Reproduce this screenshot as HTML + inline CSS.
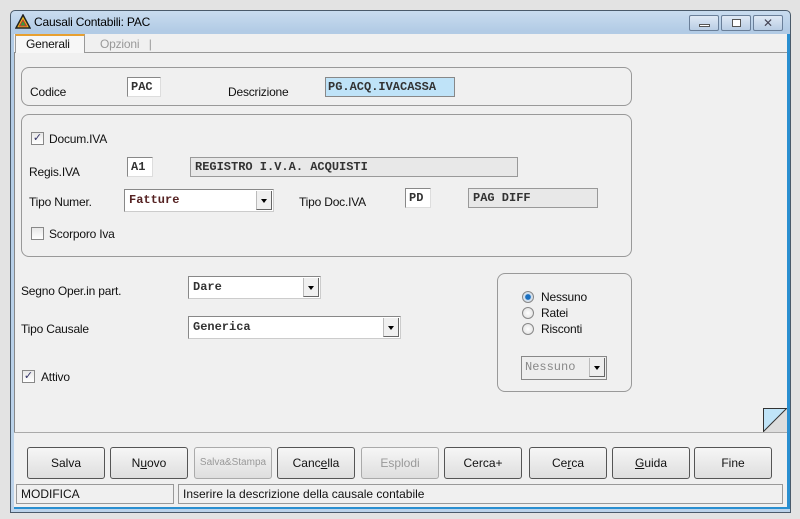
<!DOCTYPE html>
<html><head><meta charset="utf-8"><style>
*{box-sizing:border-box;margin:0;padding:0}
body{width:800px;height:519px;background:#e3e3e3;position:relative;overflow:hidden;font-family:"Liberation Sans",sans-serif;font-size:12px;color:#111}
.a{position:absolute}
.win{left:10px;top:10px;width:781px;height:503px;border:1px solid #4a5a6a;border-radius:5px 5px 0 0;background:linear-gradient(#c9dcef,#b2cbe5 20px,#bcd3ea);}
.t{font-size:12px;letter-spacing:-0.2px}
.mono{font-family:"Liberation Mono",monospace;font-size:12px;font-weight:bold;color:#333}
.tb{background:#fff;border:1px solid #888;border-right-color:#ddd;border-bottom-color:#ddd;padding:1px 3px;height:20px;line-height:16px}
.ro{background:#e8e8e8;border:1px solid #999;padding:1px 4px;height:20px;line-height:16px;color:#333}
.grp{border:1px solid #999;border-radius:8px}
.cb{width:13px;height:13px;border:1px solid #888;background:linear-gradient(#e8e8e8,#fff);font-size:11px;line-height:11px;text-align:center;color:#336}
.cmb{background:#fff;border:1px solid #888;border-right-color:#ccc;border-bottom-color:#ccc;height:23px}
.arr{position:absolute;right:1px;top:1px;width:16px;height:19px;background:#f0f0f0;border-left:1px solid #bbb;border-bottom:1px solid #666;border-right:1px solid #666}
.arr:after{content:"";position:absolute;left:4px;top:8px;border:3.5px solid transparent;border-top:4px solid #000}
.btn{top:447px;width:78px;height:32px;border:1px solid #555;border-radius:3px;background:linear-gradient(#f6f6f6,#dedede);text-align:center;line-height:30px;font-size:12px;color:#111}
.dis{color:#999;border-color:#aaa}
.rad{width:12px;height:12px;border-radius:50%;border:1px solid #888;background:radial-gradient(#fff,#ddd)}
.sb{top:484px;height:20px;border:1px solid #999;background:#f0f0f0;padding:2px 4px;font-size:12px}
</style></head><body>
<div class="a win"></div>
<svg class="a" style="left:15px;top:14px" width="16" height="15" viewBox="0 0 16 15"><path d="M8 1L15 14H1Z" fill="#e8c020" stroke="#222" stroke-width="1.5"/><path d="M8 6L11.5 12H4.5Z" fill="#3a9a3a" stroke="#c33" stroke-width="1"/></svg>
<div class="a t" style="left:34px;top:15px;font-size:12px;color:#000">Causali Contabili: PAC</div>
<div class="a" style="left:689px;top:15px;width:30px;height:16px;border:1px solid #6a7f99;border-radius:2px;background:linear-gradient(#dfe9f5,#b9cde4)"><div class="a" style="left:9px;top:8px;width:11px;height:3px;border:1px solid #555;background:#fff"></div></div>
<div class="a" style="left:721px;top:15px;width:30px;height:16px;border:1px solid #6a7f99;border-radius:2px;background:linear-gradient(#dfe9f5,#b9cde4)"><div class="a" style="left:10px;top:3px;width:9px;height:8px;border:1px solid #555;background:#fff"></div></div>
<div class="a" style="left:753px;top:15px;width:30px;height:16px;border:1px solid #6a7f99;border-radius:2px;background:linear-gradient(#dfe9f5,#b9cde4);text-align:center;font-size:12px;line-height:14px;color:#445">✕</div>
<div class="a" style="left:14px;top:34px;width:773px;height:474px;background:#f0f0f0"></div>
<div class="a" style="left:787px;top:34px;width:3px;height:474px;background:#2a8fd0"></div>
<div class="a" style="left:14px;top:507px;width:776px;height:2px;background:#2a8fd0"></div>
<div class="a" style="left:15px;top:34px;width:70px;height:19px;border:1px solid #999;border-bottom:none;border-top:2px solid #e8a030;background:#f7f7f7"></div>
<div class="a t" style="left:26px;top:37px">Generali</div>
<div class="a t" style="left:100px;top:37px;color:#999">Opzioni &nbsp;&nbsp;|</div>
<div class="a" style="left:85px;top:52px;width:702px;height:1px;background:#999"></div>
<div class="a" style="left:14px;top:52px;width:1px;height:380px;background:#888"></div>
<div class="a" style="left:14px;top:432px;width:773px;height:1px;background:#aaa"></div>
<div class="a grp" style="left:21px;top:67px;width:611px;height:39px"></div>
<div class="a t" style="left:30px;top:85px">Codice</div>
<div class="a tb mono" style="left:127px;top:77px;width:34px">PAC</div>
<div class="a t" style="left:228px;top:85px">Descrizione</div>
<div class="a mono" style="left:325px;top:77px;width:130px;height:20px;background:#bfe3f8;border:1px solid #888;padding:1px 2px;line-height:16px">PG.ACQ.IVACASSA</div>
<div class="a grp" style="left:21px;top:114px;width:611px;height:143px"></div>
<div class="a cb" style="left:31px;top:132px">✓</div>
<div class="a t" style="left:49px;top:132px">Docum.IVA</div>
<div class="a t" style="left:29px;top:165px">Regis.IVA</div>
<div class="a tb mono" style="left:127px;top:157px;width:26px">A1</div>
<div class="a ro mono" style="left:190px;top:157px;width:328px">REGISTRO I.V.A. ACQUISTI</div>
<div class="a t" style="left:29px;top:195px">Tipo Numer.</div>
<div class="a cmb mono" style="left:124px;top:189px;width:150px;padding:3px 4px;color:#522">Fatture<div class="arr"></div></div>
<div class="a t" style="left:299px;top:195px">Tipo Doc.IVA</div>
<div class="a tb mono" style="left:405px;top:188px;width:26px">PD</div>
<div class="a ro mono" style="left:468px;top:188px;width:130px">PAG DIFF</div>
<div class="a cb" style="left:31px;top:227px"></div>
<div class="a t" style="left:49px;top:227px">Scorporo Iva</div>
<div class="a t" style="left:21px;top:284px">Segno Oper.in part.</div>
<div class="a cmb mono" style="left:188px;top:276px;width:133px;padding:3px 4px">Dare<div class="arr"></div></div>
<div class="a t" style="left:21px;top:322px">Tipo Causale</div>
<div class="a cmb mono" style="left:188px;top:316px;width:213px;padding:3px 4px">Generica<div class="arr"></div></div>
<div class="a cb" style="left:22px;top:370px">✓</div>
<div class="a t" style="left:41px;top:370px">Attivo</div>
<div class="a grp" style="left:497px;top:273px;width:135px;height:119px"></div>
<div class="a rad" style="left:522px;top:291px;background:radial-gradient(#1a6fbf 35%,#cde 45%,#eee)"></div>
<div class="a t" style="left:541px;top:290px">Nessuno</div>
<div class="a rad" style="left:522px;top:307px"></div>
<div class="a t" style="left:541px;top:306px">Ratei</div>
<div class="a rad" style="left:522px;top:323px"></div>
<div class="a t" style="left:541px;top:322px">Risconti</div>
<div class="a mono" style="left:521px;top:356px;width:86px;height:24px;border:1px solid #888;background:#eee;color:#888;font-weight:normal;padding:3px 3px">Nessuno<div class="arr" style="background:#eee"></div></div>
<svg class="a" style="left:763px;top:408px" width="24" height="24"><rect x="0.5" y="0.5" width="23" height="23" fill="#c0e4f8" stroke="#333"/><path d="M0 24L24 0V24Z" fill="#ddd"/><path d="M0 24L24 0" stroke="#333"/></svg>
<div class="a btn" style="left:27px">Salva</div>
<div class="a btn" style="left:110px">N<u>u</u>ovo</div>
<div class="a btn dis" style="left:194px;font-size:10px">Salva&amp;Stampa</div>
<div class="a btn" style="left:277px">Canc<u>e</u>lla</div>
<div class="a btn dis" style="left:361px">Esplodi</div>
<div class="a btn" style="left:444px">Cerca+</div>
<div class="a btn" style="left:529px">Ce<u>r</u>ca</div>
<div class="a btn" style="left:612px"><u>G</u>uida</div>
<div class="a btn" style="left:694px">Fine</div>
<div class="a sb" style="left:16px;width:158px">MODIFICA</div>
<div class="a sb" style="left:178px;width:605px">Inserire la descrizione della causale contabile</div>
</body></html>
